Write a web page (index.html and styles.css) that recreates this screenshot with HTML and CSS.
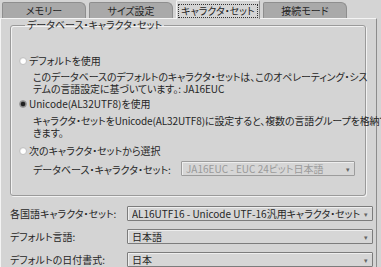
FILE: index.html
```html
<!DOCTYPE html>
<html lang="ja">
<head>
<meta charset="utf-8">
<link rel="stylesheet" href="styles.css">
</head>
<body>
<div class="tabs">
  <div class="tab">メモリー</div>
  <div class="tab">サイズ設定</div>
  <div class="tab active"><span class="focus">キャラクタ・セット</span></div>
  <div class="tab">接続モード</div>
</div>
<div class="panel">
  <fieldset class="group">
    <legend>データベース・キャラクタ・セット</legend>
    <div class="opt">
      <span class="radio"></span><span>デフォルトを使用</span>
    </div>
    <div class="desc first">このデータベースのデフォルトのキャラクタ・セットは、このオペレーティング・シス<br>テムの言語設定に基づいています。: JA16EUC</div>
    <div class="opt gap2">
      <span class="radio on"></span><span>Unicode(AL32UTF8)を使用</span>
    </div>
    <div class="desc second">キャラクタ・セットをUnicode(AL32UTF8)に設定すると、複数の言語グループを格納で<br>きます。</div>
    <div class="opt gap3">
      <span class="radio"></span><span>次のキャラクタ・セットから選択</span>
    </div>
    <div class="dbrow">
      <span class="dblabel">データベース・キャラクタ・セット:</span>
      <div class="select disabled"><span class="val">JA16EUC - EUC 24ビット日本語</span><span class="arrow">▾</span></div>
    </div>
  </fieldset>
  <div class="form">
    <div class="row">
      <span class="label">各国語キャラクタ・セット:</span>
      <div class="select"><span class="val">AL16UTF16 - Unicode UTF-16汎用キャラクタ・セット</span><span class="arrow">▾</span></div>
    </div>
    <div class="row">
      <span class="label">デフォルト言語:</span>
      <div class="select"><span class="val">日本語</span><span class="arrow">▾</span></div>
    </div>
    <div class="row">
      <span class="label">デフォルトの日付書式:</span>
      <div class="select"><span class="val">日本</span><span class="arrow">▾</span></div>
    </div>
  </div>
</div>
</body>
</html>
```
FILE: styles.css
```css
html, body {
  margin: 0;
  padding: 0;
  background: #d4d4d4;
  width: 381px;
  height: 267px;
  overflow: hidden;
}
body {
  font-family: "Noto Sans CJK JP", "Noto Sans", sans-serif;
  font-size: 10px;
  font-feature-settings: "palt";
  color: #262626;
  line-height: 12px;
}
.tabs {
  display: flex;
  gap: 3px;
  padding-left: 2px;
  height: 18px;
  align-items: flex-end;
}
.tab {
  width: 84px;
  height: 16px;
  box-sizing: border-box;
  background: #a9a9a9;
  border: 1px solid #8e8e8e;
  border-bottom: none;
  border-top-right-radius: 6px;
  border-top-left-radius: 2px;
  display: flex;
  align-items: center;
  justify-content: center;
  font-size: 10px;
  padding-top: 1px;
}
.tab.active {
  height: 19px;
  margin-bottom: -1px;
  background: #d4d4d4;
  border-color: #f4f4f4 #8c8c8c #d4d4d4 #f4f4f4;
  border-top-right-radius: 2px;
  position: relative;
  z-index: 1;
}
.focus {
  outline: 1px dotted #333;
  outline-offset: 0;
  padding: 0 2px;
  line-height: 12px;
}
.panel {
  margin-right: 4px;
  border-top: 1px solid #f4f4f4;
  border-left: 1px solid #f4f4f4;
  border-right: 1px solid #8c8c8c;
  padding: 0 3px 0 9px;
  height: 260px;
}
.group {
  margin: 0 7px 0 0;
  padding: 24px 8px 19px 8px;
  border: 1px solid #9a9a9a;
  border-radius: 3px;
  box-shadow: 1px 1px 0 #f2f2f2, inset 1px 1px 0 #f2f2f2;
  min-width: 0;
}
.group legend {
  padding: 0 2px;
  margin-left: 6px;
  line-height: 12px;
}
.opt {
  display: flex;
  align-items: center;
  height: 12px;
  gap: 2px;
}
.radio {
  width: 8px;
  height: 8px;
  border-radius: 50%;
  box-sizing: border-box;
  background: radial-gradient(circle at 60% 60%, #ffffff 0 45%, #e8e8e8 70%, #b8b8b8 100%);
  border: 1px solid #c4c4c4;
  flex: none;
}
.radio.on {
  background: radial-gradient(circle, #222 0 45%, #777 60%, #bbb 100%);
  border-color: #999;
}
.desc {
  margin-left: 14px;
  margin-top: 4px;
  white-space: nowrap;
  letter-spacing: -0.12px;
}
.gap2 { margin-top: 3px; }
.desc.second { margin-top: 5px; }
.gap3 { margin-top: 6px; }
.dbrow {
  display: flex;
  align-items: center;
  margin-top: 4px;
  margin-left: 14px;
}
.dblabel {
  width: 148px;
  flex: none;
  padding-top: 2px;
}
.select {
  flex: 1;
  height: 15px;
  box-sizing: border-box;
  border: 1px solid #7c7c7c;
  box-shadow: inset 1px 1px 0 #eeeeee;
  border-radius: 1px;
  display: flex;
  align-items: center;
  padding: 0 4px 0 4px;
  background: #d6d6d6;
  white-space: nowrap;
  overflow: hidden;
}
.select .val {
  flex: 1;
  overflow: hidden;
}
.select .arrow {
  color: #666;
  font-size: 7px;
  flex: none;
}
.select.disabled {
  border-color: #9c9c9c;
  color: #9a9a9a;
  margin-right: 2px;
}
.form {
  margin-top: 10px;
  display: flex;
  flex-direction: column;
  gap: 8px;
}
.row {
  display: flex;
  align-items: center;
}
.label {
  width: 117px;
  flex: none;
}
```
